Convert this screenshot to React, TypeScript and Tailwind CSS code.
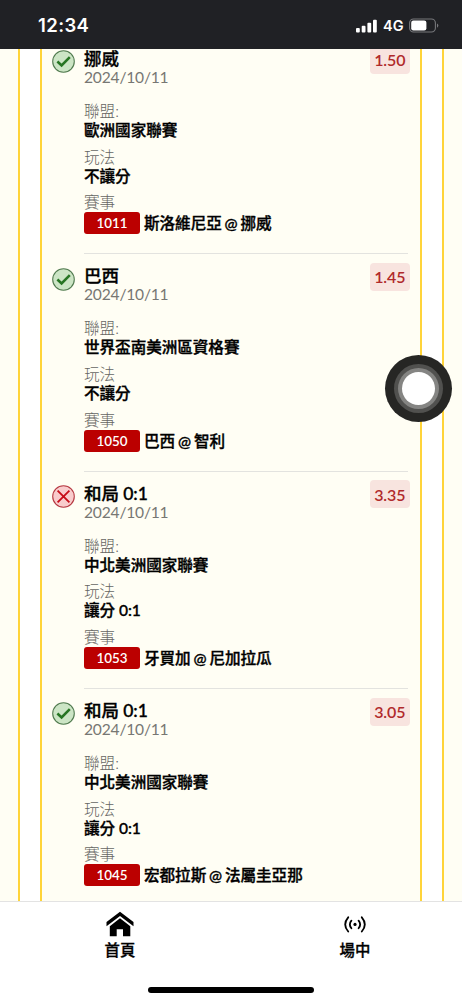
type Bet = {
  pick: string;
  odds: string;
  league: string;
  play: string;
  code: string;
  match: string;
  won: boolean;
};

const bets: Bet[] = [
  { pick: "挪威", odds: "1.50", league: "歐洲國家聯賽", play: "不讓分", code: "1011", match: "斯洛維尼亞 @ 挪威", won: true },
  { pick: "巴西", odds: "1.45", league: "世界盃南美洲區資格賽", play: "不讓分", code: "1050", match: "巴西 @ 智利", won: true },
  { pick: "和局 0:1", odds: "3.35", league: "中北美洲國家聯賽", play: "讓分 0:1", code: "1053", match: "牙買加 @ 尼加拉瓜", won: false },
  { pick: "和局 0:1", odds: "3.05", league: "中北美洲國家聯賽", play: "讓分 0:1", code: "1045", match: "宏都拉斯 @ 法屬圭亞那", won: true },
];

function StatusBar() {
  return (
    <header className="relative z-10 flex h-[49px] shrink-0 items-center justify-between bg-[#202125] pl-[38px] pr-[23px] font-['Inter',sans-serif] text-white">
      <span className="mt-px text-[18.5px] font-semibold leading-5 tracking-[0.4px]">12:34</span>
      <div className="mt-[2px] flex items-center">
        <svg width="21" height="14" viewBox="0 0 21 14" fill="white">
          <rect x="0" y="9" width="3.8" height="4.6" rx="1" />
          <rect x="5.7" y="6.7" width="3.8" height="6.9" rx="1" />
          <rect x="11.4" y="3.8" width="3.8" height="9.8" rx="1" />
          <rect x="17" y="0.7" width="3.8" height="12.9" rx="1" />
        </svg>
        <span className="ml-[6px] w-[20px] text-[14.5px] font-semibold leading-5">4G</span>
        <svg className="ml-[6px]" width="30" height="15" viewBox="0 0 30 15">
          <rect x="0.6" y="1" width="25.8" height="13" rx="4" fill="none" stroke="#77787b" strokeWidth="1.1" />
          <rect x="2.2" y="2.6" width="15.2" height="9.8" rx="2.2" fill="white" />
          <path d="M28 5.5v4.2q1.3-.6 1.3-2.1T28 5.5z" fill="#77787b" />
        </svg>
      </div>
    </header>
  );
}

function ResultIcon({ won }: { won: boolean }) {
  return (
    <svg className="mt-[14.5px] shrink-0" width="23" height="23" viewBox="0 0 23 23" fill="none">
      <circle cx="11.5" cy="11.5" r="10.8" fill={won ? "#cce5c5" : "#f9cccc"} stroke={won ? "#527b50" : "#b63a43"} strokeWidth="1.1" />
      {won ? (
        <path d="M5.4 11.5l4.2 3.9 8.2-8.2" stroke="#277523" strokeWidth="2.6" />
      ) : (
        <path d="M5.6 5.6l11.8 11.8M17.4 5.6L5.6 17.4" stroke="#c70d18" strokeWidth="1.8" />
      )}
    </svg>
  );
}

function Field({ label, value }: { label: string; value: string }) {
  return (
    <div className="mb-[7.6px] text-[15.6px] leading-[19px]">
      <div className="font-light text-[#666663]">{label}</div>
      <div className="font-medium tracking-[-0.05px] text-black [-webkit-text-stroke:0.35px_black]">{value}</div>
    </div>
  );
}

function BetRow({ bet }: { bet: Bet }) {
  return (
    <article className="flex h-[217.4px] shrink-0 pl-[10px] pr-[12px]">
      <ResultIcon won={bet.won} />
      <div className="ml-[9px] flex-1 border-t border-[#e3e3df] pt-[13.2px]">
        <div className="flex h-[52.1px] justify-between">
          <div>
            <div className="text-[17.5px] font-medium leading-[18px] tracking-[-0.05px] text-black [-webkit-text-stroke:0.35px_black]">{bet.pick}</div>
            <div className="text-[15.6px] leading-[18px] tracking-[-0.2px] text-[#777773]">2024/10/11</div>
          </div>
          <div className="-mr-[1.5px] -mt-[4.5px] flex h-[28px] w-[39.5px] items-center justify-center rounded-[4px] bg-[#f8e4df] pt-px text-[16px] font-semibold tracking-[-0.1px] text-[#b02a2b]">
            {bet.odds}
          </div>
        </div>
        <Field label="聯盟:" value={bet.league} />
        <Field label="玩法" value={bet.play} />
        <div className="text-[15.6px] font-light leading-[19px] text-[#666663]">賽事</div>
        <div className="flex items-center">
          <span className="flex h-[22px] w-[56px] items-center justify-center rounded-[3px] bg-[#bb0000] text-[13.4px] font-semibold text-white">
            {bet.code}
          </span>
          <span className="ml-[4px] whitespace-nowrap text-[15.6px] font-medium leading-[22px] tracking-[-0.05px] text-black [-webkit-text-stroke:0.35px_black] [word-spacing:-1px]">{bet.match}</span>
        </div>
      </div>
    </article>
  );
}

function TabBar() {
  return (
    <nav className="relative z-10 flex h-[99px] shrink-0 flex-col border-t border-[#e3e3e3] bg-white text-[15.4px] font-medium leading-5 text-black">
      <div className="flex h-[84px] px-[2px]">
        <a className="flex w-[236px] shrink-0 flex-col items-center pt-[9px]">
          <svg width="28" height="26" viewBox="0 0 28 26" fill="black">
            <path d="M14 .8L27.5 11v4.2L14 5 .5 15.2V11z" />
            <path d="M14 7.3l10.3 7.9v10H17v-7h-6.3v7H3.8v-10z" />
          </svg>
          <span className="mt-[3px] [-webkit-text-stroke:0.3px_black]">首頁</span>
        </a>
        <a className="flex w-[222px] flex-col items-center pl-[12px] pt-[8.5px]">
          <svg width="22" height="26" viewBox="0 0 22 26" fill="none" stroke="black" strokeWidth="1.8" strokeLinecap="round">
            <circle cx="11" cy="13.4" r="1.6" fill="black" stroke="none" />
            <path d="M7.4 9.6q-3.1 3.8 0 7.6M14.6 9.6q3.1 3.8 0 7.6M4.2 6.3q-6 7.1 0 14.2M17.8 6.3q6 7.1 0 14.2" />
          </svg>
          <span className="mt-[3.5px] [-webkit-text-stroke:0.3px_black]">場中</span>
        </a>
      </div>
      <div className="ml-[148px] mt-px h-[6px] w-[166px] rounded-full bg-black" />
    </nav>
  );
}

export default function App() {
  return (
    <div className="relative flex h-[1000px] w-[462px] flex-col overflow-hidden bg-[#fffef4] font-['Lato','Noto_Sans_CJK_TC',sans-serif]">
      <StatusBar />
      <main className="min-h-0 flex-1 overflow-hidden px-[18px]">
        <div className="h-full border-x-2 border-[#ffd43a] bg-white px-[20px]">
          <div className="h-full overflow-hidden border-x-2 border-[#ffd43a] bg-[#fffef4]">
            <div className="-mt-[13.2px] flex flex-col">
              {bets.map((bet) => (
                <BetRow key={bet.code} bet={bet} />
              ))}
            </div>
          </div>
        </div>
      </main>
      <TabBar />
      <div className="absolute left-[385px] top-[354.5px] z-20 flex size-[67px] items-center justify-center rounded-full bg-[#262624]">
        <div className="flex size-[49px] items-center justify-center rounded-full bg-[#51514f]">
          <div className="flex size-[41px] items-center justify-center rounded-full bg-[#858583]">
            <div className="size-[33px] rounded-full bg-white" />
          </div>
        </div>
      </div>
    </div>
  );
}
